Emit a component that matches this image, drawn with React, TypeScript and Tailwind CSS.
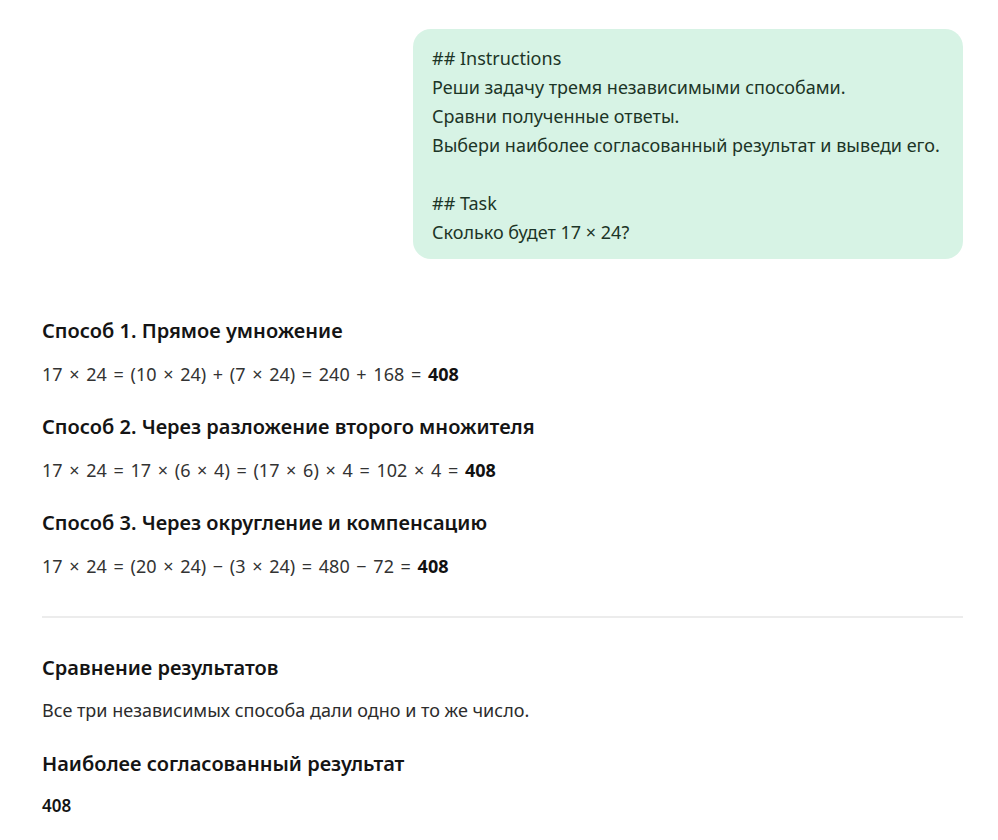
import React from "react";

type Method = { title: string; parts: string; result: string };

const methods: Method[] = [
	{ title: "Способ 1. Прямое умножение", parts: "17 × 24 = (10 × 24) + (7 × 24) = 240 + 168 = ", result: "408" },
	{ title: "Способ 2. Через разложение второго множителя", parts: "17 × 24 = 17 × (6 × 4) = (17 × 6) × 4 = 102 × 4 = ", result: "408" },
	{ title: "Способ 3. Через округление и компенсацию", parts: "17 × 24 = (20 × 24) − (3 × 24) = 480 − 72 = ", result: "408" },
];

function UserBubble() {
	return (
		<div className="flex justify-end">
			<div className="w-[550px] rounded-[18px] bg-[#d7f3e5] pl-[19px] pr-4 pt-[15px] pb-[12px] text-[18px] leading-[29px] text-[#1c3527]">
				<p>## Instructions</p>
				<p>Реши задачу тремя независимыми способами.</p>
				<p>Сравни полученные ответы.</p>
				<p>Выбери наиболее согласованный результат и выведи его.</p>
				<p>&nbsp;</p>
				<p>## Task</p>
				<p>Сколько будет 17 × 24?</p>
			</div>
		</div>
	);
}

function MethodBlock(props: { m: Method; first: boolean }) {
	const m = props.m;
	return (
		<div className={props.first ? "" : "mt-[27px]"}>
			<h3 className="text-[20px] leading-[28px] font-semibold text-[#141414]">{m.title}</h3>
			<p className="mt-[17px] text-[18px] leading-[24px] text-[#333] [word-spacing:2px]">
				{m.parts}
				<b className="font-bold text-[#111]">{m.result}</b>
			</p>
		</div>
	);
}

export default function App() {
	return (
		<div className="min-h-[840px] bg-white px-[42px] pt-[29px] font-['Noto_Sans','Open_Sans',sans-serif]">
			<div className="w-[921px]">
				<UserBubble />

				<div className="mt-[58px]">
					{methods.map((m, i) => (
						<MethodBlock key={i} m={m} first={i === 0} />
					))}
				</div>

				<hr className="mt-[38px] border-0 border-t-2 border-[#ececec]" />

				<h3 className="mt-[36px] text-[20px] leading-[28px] font-semibold text-[#141414]">Сравнение результатов</h3>
				<p className="mt-[16px] text-[18px] leading-[24px] text-[#2c2c2c]">Все три независимых способа дали одно и то же число.</p>

				<h3 className="mt-[28px] text-[20px] leading-[28px] font-semibold text-[#141414]">Наиболее согласованный результат</h3>
				<p className="mt-[16px] text-[17px] leading-[24px] font-semibold text-[#141414]">408</p>
			</div>
		</div>
	);
}
